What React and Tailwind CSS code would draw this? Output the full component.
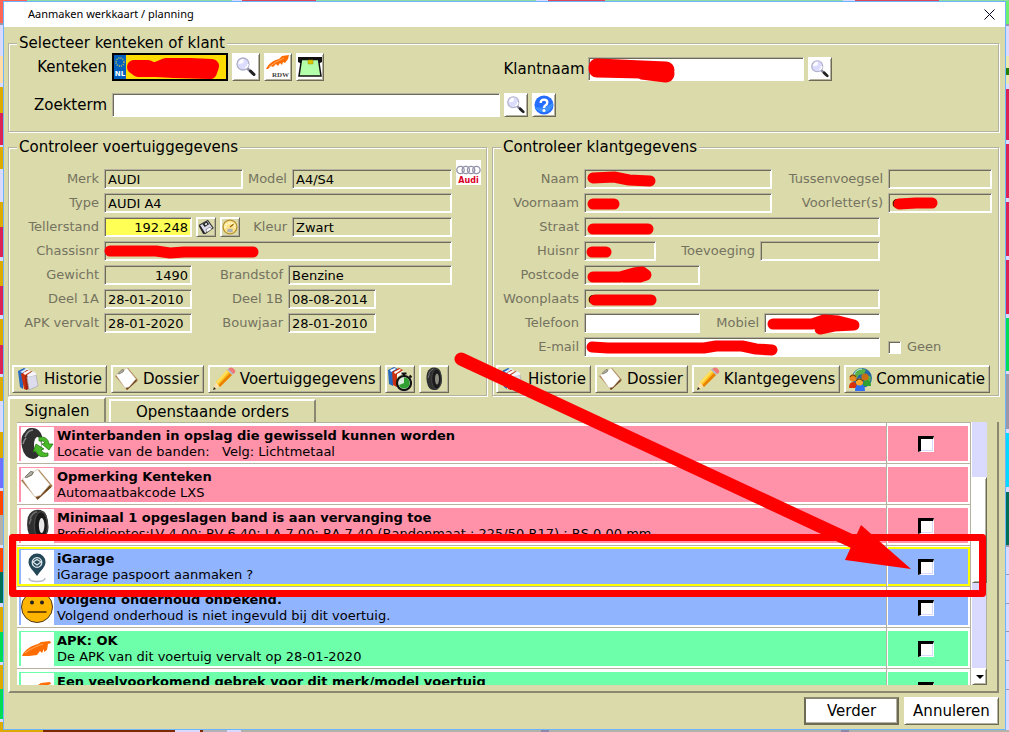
import React, { useState } from "react";

const signals = [
    { id: 1, color: "pink", icon: "tyreSwap", title: "Winterbanden in opslag die gewisseld kunnen worden", text: "Locatie van de banden:\u00a0\u00a0 Velg: Lichtmetaal", check: true },
    { id: 2, color: "pink", icon: "clipboard", title: "Opmerking Kenteken", text: "Automaatbakcode LXS", check: false },
    { id: 3, color: "pink", icon: "tyre", title: "Minimaal 1 opgeslagen band is aan vervanging toe", text: "Profieldieptes:LV 4,00; RV 6,40; LA 7,00; RA 7,40 (Bandenmaat : 225/50 R17) ; RS 0,00 mm", check: true },
    { id: 4, color: "blue", icon: "pin", title: "iGarage", text: "iGarage paspoort aanmaken ?", check: true, selected: true },
    { id: 5, color: "blue", icon: "face", title: "Volgend onderhoud onbekend.", text: "Volgend onderhoud is niet ingevuld bij dit voertuig.", check: true },
    { id: 6, color: "green", icon: "feather", title: "APK: OK", text: "De APK van dit voertuig vervalt op 28-01-2020", check: true },
    { id: 7, color: "green", icon: "feather", title: "Een veelvoorkomend gebrek voor dit merk/model voertuig", text: "", check: true },
];

const rowColors = {
    pink: "bg-[#ff91a9]",
    blue: "bg-[#91b4ff]",
    green: "bg-[#6dffa9]",
};

// [colour, height] of the planning board behind the dialog
const leftBoard = [
    ["#ff6655", 22], ["#9a98a8", 2], ["#dadaff", 31], ["#ffdca8", 28], ["#dadaff", 4], ["#dcaa00", 26], ["#da2455", 32], ["#dadaff", 2],
    ["#dcaa00", 22], ["#dadaff", 33], ["#dcaa00", 26], ["#da2455", 30], ["#dadaff", 4], ["#dcaa00", 25], ["#da2455", 29], ["#dadaff", 4],
    ["#dcaa00", 26], ["#da2455", 30], ["#dadaff", 3], ["#dcaa00", 24], ["#dadaff", 31], ["#dcaa00", 26], ["#7070ff", 30], ["#dadaff", 3],
    ["#ff4800", 25], ["#b4b2a8", 30], ["#dadaff", 3], ["#ff4800", 24], ["#007055", 31], ["#dadaff", 4], ["#dcaa00", 25], ["#00dc55", 31],
    ["#dadaff", 3], ["#dcaa00", 24], ["#00dc55", 30], ["#dadaff", 3], ["#dcaa00", 8],
];
const rightBoard = [
    ["#6df06d", 23], ["#9a98a8", 2], ["#dadaff", 30], ["#e8e8b0", 12], ["#248000", 7], ["#e8e8b0", 9], ["#dadaff", 5], ["#da2455", 52],
    ["#dadaff", 4], ["#da2455", 54], ["#dadaff", 4], ["#da2455", 54], ["#dadaff", 4], ["#da2455", 54], ["#dadaff", 4], ["#00dc55", 54],
    ["#dadaff", 3], ["#9a98a8", 55], ["#dadaff", 4], ["#00daff", 54], ["#dadaff", 5], ["#007055", 53], ["#9a98a8", 2], ["#dadaff", 27],
    ["#9a98a8", 1], ["#dadaff", 28], ["#9a98a8", 1], ["#dadaff", 28], ["#9a98a8", 1], ["#dadaff", 28], ["#9a98a8", 1], ["#dadaff", 28],
    ["#9a98a8", 1], ["#dadaff", 40],
];
const topBoard = [["#ff6655", 27], ["#91dca0", 205], ["#dadaff", 10], ["#dc4855", 74], ["#91dca0", 220], ["#dadaff", 12], ["#dc4855", 57], ["#91dca0", 238], ["#dadaff", 12], ["#dc4855", 84], ["#91dca0", 70]];
const bottomBoard = [["#dcaa00", 43], ["#802800", 132], ["#dadaff", 25], ["#802800", 3], ["#b4b2b8", 24], ["#dadaff", 14], ["#b4b2a8", 300], ["#9088a8", 8], ["#b4b2a8", 292], ["#9088a8", 8], ["#b4b2a8", 160]];

const Board = ({ cells, vertical, className }) => (
    <div className={`flex ${vertical ? "flex-col" : ""} overflow-hidden ${className}`}>
        {cells.map(([color, size], i) => (
            <div key={i} style={{ backgroundColor: color, flex: `${size} 1 0px` }} />
        ))}
    </div>
);

const Magnifier = () => (
    <svg viewBox="0 0 24 24" className="h-6 w-6">
        <path d="M13 13l6 6" stroke="#8888a0" strokeWidth="2.500" />
        <path d="M16.500 16l3.500 3.500" stroke="#222" strokeWidth="3" strokeLinecap="round" />
        <circle cx="9" cy="9" r="6" fill="#dcdcff" stroke="#b0b0c8" strokeWidth="1.300" />
        <path d="M4.500 9a5 5 0 0 1 5-5v4z" fill="#fff" />
        <path d="M11 13q3-1 3-4" stroke="#fff" strokeWidth="1.500" fill="none" />
    </svg>
);

const Rdw = () => (
    <svg viewBox="0 0 24 24" className="h-6 w-6">
        <path d="M0 14C3 8 8 5 13 4l3-3 7-1-1 4-3 4-2-1-1 3-2-2-2 3-2-2-3 3-2-1-3 3z" fill="#ff6d00" />
        <path d="M3 12q6-5 15-9" stroke="#ffa860" fill="none" />
        <text x="23" y="22" textAnchor="end" fontSize="7" fontWeight="bold" fontFamily="Liberation Serif, serif" fill="#444">RDW</text>
    </svg>
);

const Printer = () => (
    <svg viewBox="0 0 24 24" className="h-6 w-6">
        <path d="M0 2h24v5l-2 1H2L0 7z" fill="#111" />
        <path d="M3.500 4.500h17L23 21H1z" fill="#b4ffaa" stroke="#111" strokeWidth="1.500" />
        <path d="M10 5h5v4h-5z" fill="#dcc800" stroke="#a08800" strokeWidth=".5" />
    </svg>
);

const Help = () => (
    <svg viewBox="0 0 24 24" className="h-5 w-5">
        <circle cx="12" cy="12" r="11.500" fill="#246dff" />
        <path d="M1 14q10 4 22-5a11.500 11.500 0 0 1-22 5" fill="#48a0ff" opacity=".7" />
        <path d="M8 9.500q0-4 4-4t4 3.500q0 2-2.500 3.500-1.500 1-1.500 3" fill="none" stroke="#fff" strokeWidth="2.800" />
        <circle cx="12" cy="18.500" r="1.800" fill="#fff" />
    </svg>
);

const Floppy = () => (
    <svg viewBox="0 0 18 18" className="h-4 w-4">
        <path d="M1.500 7L11 1.500l6 8.500-9 6.500-2-.5z" fill="#dadaec" stroke="#333" strokeWidth="1.200" />
        <path d="M5 5.500l5-3 2.500 3.500-5 3z" fill="#222" />
        <path d="M7.500 5.500l2-1.200 1 1.500-2 1.200z" fill="#fff" />
        <path d="M9 12l4.500-3 2 2.500L10 15z" fill="#fff" stroke="#555" strokeWidth=".6" />
        <path d="M2 8l5 8" stroke="#222" strokeWidth="2" />
    </svg>
);

const Gauge = () => (
    <svg viewBox="0 0 18 18" className="h-4 w-4">
        <circle cx="9" cy="9" r="7.800" fill="#ffe48a" stroke="#b49030" strokeWidth="1.400" />
        <path d="M3.500 10a5.500 5.500 0 0 1 11 0" fill="none" stroke="#fff8d8" strokeWidth="2" strokeDasharray="2 1.200" />
        <path d="M9 9l4-3" stroke="#906000" strokeWidth="1.300" />
        <rect x="6" y="11" width="6" height="4" fill="#b0b0b0" />
    </svg>
);

const Audi = () => (
    <svg viewBox="0 0 25 25" className="h-[25px] w-[25px] shrink-0 bg-white" role="img">
        <g fill="none" stroke="#9090a8" strokeWidth="1.300">
            <circle cx="4.500" cy="10" r="3.700" />
            <circle cx="9.800" cy="10" r="3.700" />
            <circle cx="15.100" cy="10" r="3.700" />
            <circle cx="20.400" cy="10" r="3.700" />
        </g>
        <text x="12.500" y="23" textAnchor="middle" fontSize="8" fontWeight="bold" fontFamily="DejaVu Sans, sans-serif" fill="#da0024">Audi</text>
    </svg>
);

const Books = () => (
    <svg viewBox="0 0 24 24" className="h-6 w-6">
        <path d="M2 4l6-3 4 2-1 3-4 3v13l-3-2z" fill="#2468c0" />
        <path d="M4 5l7-4 2 1-6 4z" fill="#dcecff" />
        <path d="M5 7l6-4 4 1-5 5 1 14-3-1z" fill="#c83010" />
        <path d="M7 6l6-3 2 1-6 4z" fill="#fff" />
        <path d="M9 9l7-5 3 2-6 4v12l-3 1z" fill="#a02408" />
        <path d="M11 10l9-2 2 11-9 4z" fill="#dcdcec" stroke="#a8a8b8" strokeWidth=".7" />
        <path d="M11 8l6-4 3 2v2l-8 2z" fill="#f4f4ff" />
    </svg>
);

const Clipboard = ({ className = "h-6 w-6" }) => (
    <svg viewBox="0 0 24 24" className={className}>
        <path d="M0 9L13 1l10 12-11 10z" fill="#a87848" />
        <path d="M22 14l-10 9-3-5 4 2 7-8z" fill="#704820" />
        <path d="M1 8L12 1l9 11-7 8-4 1z" fill="#fff" stroke="#c8b8a0" strokeWidth=".5" />
        <path d="M3 6.500l4-4 2 .5-1 2-4 2z" fill="#b0b0a8" stroke="#706858" strokeWidth=".7" />
    </svg>
);

const Pencil = () => (
    <svg viewBox="0 0 24 24" className="h-6 w-6">
        <path d="M1 23l3-8 4 4z" fill="#ffe0a8" />
        <path d="M1 23l1-3 2 2z" fill="#222" />
        <path d="M4 15L15 3l5 5L8 20z" fill="#ffc020" />
        <path d="M6.500 18L18 6l2 2L8 20z" fill="#e88000" />
        <path d="M4 15L15 3l1.500 1.500L6 16.500z" fill="#ffe060" />
        <path d="M15 3l2-2 5 5-2 2z" fill="#b8b8c8" />
        <path d="M17 1.500q2-2 4.500 0t1.500 4l-1.500 1.500-5-5z" fill="#f07878" />
    </svg>
);

const BooksTimer = () => (
    <svg viewBox="0 0 24 24" className="h-6 w-6">
        <path d="M0 3l6-3 4 2-5 5v12l-4-2z" fill="#2468c0" />
        <path d="M4 5l7-4 4 2-6 5v12l-4-2z" fill="#c83010" />
        <path d="M2 3l5-2 1 1-5 3zM6 5l6-3 1 1-6 4zM9 7l6-3 1 2-7 4z" fill="#fff" />
        <circle cx="16" cy="16" r="7" fill="#dcecdc" stroke="#111" strokeWidth="2.200" />
        <path d="M16 16V10.500a5.500 5.500 0 1 1-5 7.500z" fill="#30a030" />
        <path d="M13.500 6.500h5M16 6.500v3M21.500 8.500l2 2" stroke="#111" strokeWidth="2.200" />
    </svg>
);

const Tyre = ({ className = "h-6 w-6", hole = "#8c8c80" }) => (
    <svg viewBox="0 0 24 24" className={className}>
        <path d="M12 .5q5 0 6.500 4t1.500 9-4.500 9q-7 2-9.500-3.500T5 6q2-5.500 7-5.500z" fill="#303030" />
        <ellipse cx="14.500" cy="12" rx="4.800" ry="10" fill="#1a1a1a" stroke="#4a4a4a" strokeWidth=".8" />
        <ellipse cx="15" cy="12" rx="2" ry="5.500" fill={hole} />
        <path d="M6.500 7q2-4.500 5-5M6 11q.5-2 1.500-4" stroke="#707070" fill="none" />
    </svg>
);

const TyreSwap = () => (
    <svg viewBox="0 0 33 33" className="h-[33px] w-[33px]">
        <path d="M10 1q8-1 11 8l-1 16q-3 7-8 7Q3 31 1 20T4 5q2-4 6-4z" fill="#303030" />
        <ellipse cx="16.500" cy="18" rx="3.500" ry="8" fill="#fff" />
        <path d="M4 10q3-7 8-7M2 17q1-4 3-6" stroke="#888" fill="none" strokeWidth="1.500" />
        <path d="M18 10q9-1 10 7l4 0-4 6-7-6 3-1q-1-3-6-2z" fill="#48b828" stroke="#187008" strokeWidth=".7" />
        <path d="M27 29q-10 3-12-5l-3 1 3-8 8 5-3 1q2 4 7 3z" fill="#48b828" stroke="#187008" strokeWidth=".7" />
    </svg>
);

const Globe = () => (
    <svg viewBox="0 0 24 24" className="h-6 w-6">
        <circle cx="14" cy="11" r="10" fill="#2468a8" />
        <path d="M8 3q5-3 10 0l-2 4-5 1-2 3-4-1zM19 8l4 2-1 6-4 1-2-4z" fill="#58b048" />
        <path d="M6 8q2-6 8-6" stroke="#b8e8ff" fill="none" />
        <path d="M1 21q0-6 4-6t4 6z" fill="#dc3008" />
        <path d="M15 19q0-6 4-6t4 6z" fill="#30a030" />
        <path d="M7 24q0-7 5-7t5 7z" fill="#3070f0" />
        <circle cx="5" cy="11" r="3.600" fill="#e88820" />
        <circle cx="17" cy="10" r="3.600" fill="#c87010" />
        <circle cx="11.500" cy="15" r="3.600" fill="#ffa830" />
        <path d="M2 10q3-4 6 0M8 14q3-4 7 0" stroke="#704000" strokeWidth="1.200" fill="none" />
    </svg>
);

const Pin = () => (
    <svg viewBox="0 0 33 33" className="h-[33px] w-[33px]">
        <path d="M16 26C12 20 7.500 17 7.500 12a8.500 8.500 0 0 1 17 0c0 5-4.500 8-8.500 14z" fill="#244858" />
        <circle cx="16" cy="12.500" r="4.800" fill="none" stroke="#dce8ec" strokeWidth="1.300" />
        <path d="M12 12l4-2.500 4 2.500-4 3z" fill="none" stroke="#dce8ec" strokeWidth="1.200" />
        <path d="M8 28q0 3.500 8 3.500t8-3.500" fill="none" stroke="#b8bcc8" strokeWidth="1.500" />
    </svg>
);

const Face = () => (
    <svg viewBox="0 0 33 33" className="h-[33px] w-[33px]">
        <circle cx="16" cy="16" r="15.500" fill="#ffb400" stroke="#4a3820" strokeWidth="1" />
        <circle cx="11" cy="11.500" r="2" fill="#222" />
        <circle cx="21" cy="11.500" r="2" fill="#222" />
        <path d="M6.500 21h19" stroke="#4a2800" strokeWidth="1.500" />
    </svg>
);

const Feather = () => (
    <svg viewBox="0 0 33 33" className="h-[33px] w-[33px]">
        <path d="M1 24C4 17 10 14 17 12l3-2 9-1 1 2-3 1-1 6-3 2 0-3-2 4-2-2-3 4-8 1z" fill="#ff6d00" />
        <path d="M4 21q8-6 18-9" stroke="#ffa050" fill="none" strokeWidth="1.200" />
    </svg>
);

const signalIcons = {
    tyreSwap: <TyreSwap />,
    clipboard: <Clipboard className="h-[33px] w-[33px]" />,
    tyre: <Tyre className="h-[33px] w-[33px]" hole="#e8e8e8" />,
    pin: <Pin />,
    face: <Face />,
    feather: <Feather />,
};

const raised = "border border-t-white border-l-white border-r-[#6d6b55] border-b-[#6d6b55] shadow-[inset_1px_1px_0_#fff,inset_-1px_-1px_0_#b5b2a0]";
const sunken = "border border-t-[#b5b2a0] border-l-[#b5b2a0] border-r-white border-b-white shadow-[inset_1px_1px_0_#6d6b55,inset_-1px_-1px_0_#fff]";

const IconButton = ({ label, className, children }) => (
    <button type="button" aria-label={label} className={`flex shrink-0 items-center justify-center ${raised} ${className}`}>
        {children}
    </button>
);

const ToolButton = ({ icon, children }) => (
    <button type="button" className={`flex h-7 shrink-0 items-center gap-1 pr-1 pl-[3px] text-[15px] whitespace-nowrap ${raised}`}>
        {icon}
        {children}
    </button>
);

const Blot = ({ d, width = 11 }) => (
    <svg className="pointer-events-none absolute top-0 left-0 h-full w-full overflow-visible">
        <path d={d} fill="none" stroke="#f00" strokeWidth={width} strokeLinecap="round" strokeLinejoin="round" />
    </svg>
);

const Field = ({ id, value = "", width, bg = "bg-transparent", align = "", height = "h-5", children }) => (
    <div className={`relative ${height} ${width}`}>
        <input id={id} type="text" defaultValue={value} className={`block h-full w-full px-[3px] text-[13px] text-black outline-none ${bg} ${align} ${sunken}`} />
        {children}
    </div>
);

const Label = ({ id, className = "", children }) => (
    <label htmlFor={id} className={`mr-[5px] text-right text-[13px] whitespace-nowrap text-[#757360] ${className}`}>{children}</label>
);

const Group = ({ title, className = "", children }) => (
    <fieldset className={`flex min-w-0 flex-col border border-[#b5b2a0] shadow-[inset_1px_1px_0_#fff,1px_1px_0_#fff] ${className}`}>
        <legend className="ml-2 bg-[#dadaaa] px-0.5 text-[15px] leading-[18px]">{title}</legend>
        {children}
    </fieldset>
);

const SearchGroup = () => (
    <Group title="Selecteer kenteken of klant">
        <div className="flex flex-col gap-3 pt-px pb-3.5 text-[15px]">
            <div className="flex items-end">
                <div className="flex w-1/2 items-center">
                    <label htmlFor="kenteken" className="mr-[5px] w-[98px] shrink-0 text-right">Kenteken</label>
                    <div className="relative flex h-7 w-[116px] shrink-0 border-2 border-black bg-[#ffdc00]">
                        <div className="flex w-3 flex-col items-center justify-between bg-[#0060c0]">
                            <svg viewBox="0 0 12 14" className="h-3.5 w-3">
                                <circle cx="6" cy="7" r="4" fill="none" stroke="#c8c048" strokeWidth="1.500" strokeDasharray="1 1.100" />
                            </svg>
                            <span className="text-[7px] leading-[9px] font-bold text-white">NL</span>
                        </div>
                        <input id="kenteken" type="text" className="w-full min-w-0 flex-1 outline-none" />
                        <Blot width={14} d="M20 12L34 12L40 15L52 10L76 10L98 11L96 17L60 16L42 15L24 15L20 12" />
                    </div>
                    <div className="ml-1 flex gap-1">
                        <IconButton label="Zoek kenteken" className="h-7 w-7 bg-white"><Magnifier /></IconButton>
                        <IconButton label="RDW" className="h-7 w-7 bg-white"><Rdw /></IconButton>
                        <IconButton label="Scan" className="h-7 w-7 bg-white"><Printer /></IconButton>
                    </div>
                </div>
                <div className="flex items-center">
                    <label htmlFor="klantnaam" className="mr-[3px]">Klantnaam</label>
                    <Field id="klantnaam" width="w-[216px]" height="h-6" bg="bg-white">
                        <Blot width={17} d="M9 10L32 11L54 12L78 13M54 14L78 17M9 12L54 13" />
                    </Field>
                    <IconButton label="Zoek klant" className="ml-1 h-6 w-6 bg-white"><Magnifier /></IconButton>
                </div>
            </div>
            <div className="flex items-center">
                <label htmlFor="zoekterm" className="mr-[5px] w-[98px] text-right">Zoekterm</label>
                <Field id="zoekterm" width="w-[388px]" height="h-6" bg="bg-white" />
                <IconButton label="Zoek" className="ml-1 h-6 w-6 bg-white"><Magnifier /></IconButton>
                <IconButton label="Help" className="ml-1 h-6 w-6 bg-white"><Help /></IconButton>
            </div>
        </div>
    </Group>
);

const VehicleGroup = () => (
    <Group title="Controleer voertuiggegevens">
        <div className="flex h-full flex-col justify-between pt-1 pb-0.5">
            <div className="flex gap-1 pr-[5px]">
                <div className="mt-[9px] flex flex-1 flex-col gap-1">
                    <div className="flex items-center">
                        <Label id="merk" className="w-[90px]">Merk</Label>
                        <Field id="merk" value="AUDI" width="flex-1" />
                        <Label id="model" className="ml-[5px]">Model</Label>
                        <Field id="model" value="A4/S4" width="w-[160px]" />
                    </div>
                    <div className="flex items-center">
                        <Label id="type" className="w-[90px]">Type</Label>
                        <Field id="type" value="AUDI A4" width="flex-1" />
                    </div>
                    <div className="flex items-center">
                        <Label id="tellerstand" className="w-[90px]">Tellerstand</Label>
                        <Field id="tellerstand" value="192.248" width="w-[88px]" bg="bg-[#ffff55]" align="text-right" />
                        <IconButton label="Opslaan" className="ml-1 h-5 w-5"><Floppy /></IconButton>
                        <IconButton label="Tellerhistorie" className="ml-1 h-5 w-5"><Gauge /></IconButton>
                        <Label id="kleur" className="flex-1">Kleur</Label>
                        <Field id="kleur" value="Zwart" width="w-[160px]" />
                    </div>
                    <div className="flex items-center">
                        <Label id="chassisnr" className="w-[90px]">Chassisnr</Label>
                        <Field id="chassisnr" width="flex-1">
                            <Blot d="M6 10L52 10L66 12L80 11L149 11" />
                        </Field>
                    </div>
                    <div className="flex items-center">
                        <Label id="gewicht" className="w-[90px]">Gewicht</Label>
                        <Field id="gewicht" value="1490" width="w-[88px]" align="text-right" />
                        <Label id="brandstof" className="flex-1">Brandstof</Label>
                        <Field id="brandstof" value="Benzine" width="w-[164px]" />
                    </div>
                    <div className="flex items-center">
                        <Label id="deel1a" className="w-[90px]">Deel 1A</Label>
                        <Field id="deel1a" value="28-01-2010" width="w-[88px]" />
                        <Label id="deel1b" className="flex-1">Deel 1B</Label>
                        <div className="w-[164px]"><Field id="deel1b" value="08-08-2014" width="w-[88px]" /></div>
                    </div>
                    <div className="flex items-center">
                        <Label id="apk" className="w-[90px]">APK vervalt</Label>
                        <Field id="apk" value="28-01-2020" width="w-[88px]" />
                        <Label id="bouwjaar" className="flex-1">Bouwjaar</Label>
                        <div className="w-[164px]"><Field id="bouwjaar" value="28-01-2010" width="w-[88px]" /></div>
                    </div>
                </div>
                <Audi />
            </div>
            <div className="flex gap-1 pl-[3px]">
                <ToolButton icon={<Books />}>Historie</ToolButton>
                <ToolButton icon={<Clipboard />}>Dossier</ToolButton>
                <ToolButton icon={<Pencil />}>Voertuiggegevens</ToolButton>
                <IconButton label="Werkhistorie" className="h-7 w-[30px]"><BooksTimer /></IconButton>
                <IconButton label="Banden" className="h-7 w-[30px]"><Tyre /></IconButton>
            </div>
        </div>
    </Group>
);

const CustomerGroup = () => (
    <Group title="Controleer klantgegevens">
        <div className="flex h-full flex-col gap-2 pt-[13px] pb-0.5">
            <div className="flex flex-col gap-1 pr-1.5">
                <div className="flex items-center">
                    <Label id="naam" className="w-[86px]">Naam</Label>
                    <Field id="naam" width="w-[188px]"><Blot d="M9 9L30 8L45 11L66 12" /></Field>
                    <Label id="tussenvoegsel" className="flex-1">Tussenvoegsel</Label>
                    <Field id="tussenvoegsel" width="w-[104px]" />
                </div>
                <div className="flex items-center">
                    <Label id="voornaam" className="w-[86px]">Voornaam</Label>
                    <Field id="voornaam" width="w-[188px]"><Blot d="M9 11L30 11" /></Field>
                    <Label id="voorletters" className="flex-1">Voorletter(s)</Label>
                    <Field id="voorletters" value="G" width="w-[104px]"><Blot d="M11 11L28 10L44 10" /></Field>
                </div>
                <div className="flex items-center">
                    <Label id="straat" className="w-[86px]">Straat</Label>
                    <Field id="straat" width="w-[296px]"><Blot d="M9 12L64 12" /></Field>
                </div>
                <div className="flex items-center">
                    <Label id="huisnr" className="w-[86px]">Huisnr</Label>
                    <Field id="huisnr" width="w-[72px]"><Blot d="M8 11L22 11" /></Field>
                    <Label id="toevoeging" className="w-[99px]">Toevoeging</Label>
                    <Field id="toevoeging" width="w-[120px]" />
                </div>
                <div className="flex items-center">
                    <Label id="postcode" className="w-[86px]">Postcode</Label>
                    <Field id="postcode" width="w-[116px]"><Blot d="M9 12L36 12L50 8L58 7L62 10L56 12L40 12" /></Field>
                </div>
                <div className="flex items-center">
                    <Label id="woonplaats" className="w-[86px]">Woonplaats</Label>
                    <Field id="woonplaats" value="G" width="w-[296px]"><Blot d="M11 11L67 11" /></Field>
                </div>
                <div className="flex items-center">
                    <Label id="telefoon" className="w-[86px]">Telefoon</Label>
                    <Field id="telefoon" width="w-[116px]" bg="bg-white" />
                    <Label id="mobiel" className="w-[59px]">Mobiel</Label>
                    <Field id="mobiel" width="w-[116px]" bg="bg-white">
                        <Blot d="M9 11L48 11L60 7L74 8L90 12L70 13L56 16" />
                    </Field>
                </div>
                <div className="flex items-center">
                    <Label id="email" className="w-[86px]">E-mail</Label>
                    <Field id="email" width="w-[296px]" bg="bg-white">
                        <Blot d="M8 10L24 11L120 11L132 9L158 9L172 12L188 13" />
                    </Field>
                    <input id="geen" type="checkbox" className={`ml-2 h-[13px] w-[13px] appearance-none bg-white ${sunken}`} />
                    <label htmlFor="geen" className="ml-1.5 text-[13px] text-[#757360]">Geen</label>
                </div>
            </div>
            <div className="flex gap-1 pl-[3px]">
                <ToolButton icon={<Books />}>Historie</ToolButton>
                <ToolButton icon={<Clipboard />}>Dossier</ToolButton>
                <ToolButton icon={<Pencil />}>Klantgegevens</ToolButton>
                <ToolButton icon={<Globe />}>Communicatie</ToolButton>
            </div>
        </div>
    </Group>
);

const SignalRow = ({ signal }) => {
    const color = rowColors[signal.color];
    const pad = signal.selected ? "pt-px" : "pt-[3px] pb-0.5";
    const box = signal.selected ? "h-[39px] border-y-2 border-[#ff0]" : "h-[35px]";
    return (
        <tr>
            <td className={`border-t border-r border-[#b5b2a0] p-0 ${pad} ${signal.selected ? "" : "pl-0.5"}`}>
                <div className={`flex gap-[3px] overflow-hidden pt-px pl-0.5 ${box} ${color} ${signal.selected ? "border-l-2" : ""}`}>
                    <div className="h-[34px] w-[33px] shrink-0 bg-white">{signalIcons[signal.icon]}</div>
                    <div className="min-w-0 text-[13px] whitespace-nowrap">
                        <div className="leading-[17px] font-bold">{signal.title}</div>
                        <div className="leading-4">{signal.text}</div>
                    </div>
                </div>
            </td>
            <td className={`border-t border-r border-[#b5b2a0] p-0 ${pad} pl-px ${signal.selected ? "" : "pr-0.5"}`}>
                <div className={`flex items-center justify-center pr-1 ${box} ${color} ${signal.selected ? "border-r-2" : ""}`}>
                    {signal.check && (
                        <input type="checkbox" aria-label={signal.title} className="h-4 w-4 appearance-none border-t-[3px] border-r border-b border-l-[3px] border-t-black border-r-white border-b-white border-l-black bg-white shadow-[inset_-1px_-1px_0_#dadaff]" />
                    )}
                </div>
            </td>
        </tr>
    );
};

const SignalPanel = () => {
    const [tab, setTab] = useState("signalen");
    return (
        <div className="flex flex-col">
            <div className="flex items-end gap-[3px]" role="tablist">
                <button type="button" role="tab" aria-selected={tab === "signalen"} onClick={() => setTab("signalen")} className="h-[25px] w-[98px] border-t-2 border-r-2 border-l-2 border-t-white border-r-[#8a8870] border-l-white text-[15px] leading-[22px]">
                    Signalen
                </button>
                <button type="button" role="tab" aria-selected={tab === "orders"} onClick={() => setTab("orders")} className="h-[23px] w-[207px] border-t-2 border-r-2 border-l-2 border-t-white border-r-[#8a8870] border-l-white text-[15px] leading-[22px]">
                    Openstaande orders
                </button>
            </div>
            <div className="border-r-2 border-b-2 border-l-2 border-r-[#8a8870] border-b-[#8a8870] border-l-white pr-2.5 pb-1.5 pl-[7px]">
                <div className="flex h-[263px] overflow-hidden">
                    <div className="flex-1 overflow-hidden bg-white">
                        <table className="w-full table-fixed border-separate border-spacing-0">
                            <colgroup>
                                <col />
                                <col className="w-[84px]" />
                            </colgroup>
                            <tbody>
                                {signals.map((signal) => (
                                    <SignalRow key={signal.id} signal={signal} />
                                ))}
                            </tbody>
                        </table>
                    </div>
                    <div className="flex w-4 flex-col border-l border-white bg-[#dadaff]">
                        <div className="h-[55px]" />
                        <div className={`h-[106px] bg-white ${raised}`} />
                        <div className="flex-1 border-r border-[#b5b2a0]" />
                        <button type="button" aria-label="Omlaag" className={`flex h-[17px] items-center justify-center bg-white ${raised}`}>
                            <svg viewBox="0 0 8 4" className="h-1 w-2"><path d="M0 0h8L4 4z" fill="#000" /></svg>
                        </button>
                    </div>
                </div>
            </div>
        </div>
    );
};

// red pen marks: box round the selected signal and an arrow to its check box
const PenMarks = () => (
    <svg width="1009" height="732" className="pointer-events-none absolute top-0 left-0">
        <rect x="12.500" y="537.500" width="970" height="56" fill="none" stroke="#f00" strokeWidth="7" strokeLinejoin="round" />
        <path d="M461 359L856 543" stroke="#f00" strokeWidth="13" strokeLinecap="round" />
        <path d="M861 525L911 569L845 560z" fill="#f00" />
    </svg>
);

const App = () => {
    return (
        <div className="relative flex min-h-screen flex-col overflow-hidden bg-[#b4b2a8] font-['DejaVu_Sans',Verdana,sans-serif] text-black">
            <Board cells={topBoard} className="h-px" />
            <div className="flex flex-1">
                <Board cells={leftBoard} vertical className="w-[3px]" />
                <div className="flex min-w-0 flex-1 flex-col border border-[#6db4ff] bg-[#dadaaa]">
                    <div className="flex h-[25px] items-center justify-between bg-white pr-2.5 pl-6">
                        <span className="font-['Noto_Sans',sans-serif] text-[11px]">Aanmaken werkkaart / planning</span>
                        <button type="button" aria-label="Sluiten">
                            <svg viewBox="0 0 11 11" className="h-[11px] w-[11px]"><path d="M.5.5l10 10M10.500.5l-10 10" stroke="#000024" /></svg>
                        </button>
                    </div>
                    <div className="flex flex-1 flex-col px-1 pt-[7px] pr-1.5 pb-1">
                        <SearchGroup />
                        <div className="mt-1.5 grid grid-cols-[minmax(0,479fr)_minmax(0,507fr)] gap-[5px]">
                            <VehicleGroup />
                            <CustomerGroup />
                        </div>
                        <div className="mt-px">
                            <SignalPanel />
                        </div>
                        <div className="mt-1 flex justify-end gap-[5px] text-[15px]">
                            <button type="button" className="h-7 w-[95px] border-2 border-[#6d6b55] border-t-[#8a8870] bg-white shadow-[inset_-1px_-1px_0_#b5b2a0]">Verder</button>
                            <button type="button" className={`h-7 w-[95px] bg-white ${raised}`}>Annuleren</button>
                        </div>
                    </div>
                </div>
                <Board cells={rightBoard} vertical className="w-[3px]" />
            </div>
            <Board cells={bottomBoard} className="h-0.5" />
            <PenMarks />
        </div>
    );
};

export default App;
